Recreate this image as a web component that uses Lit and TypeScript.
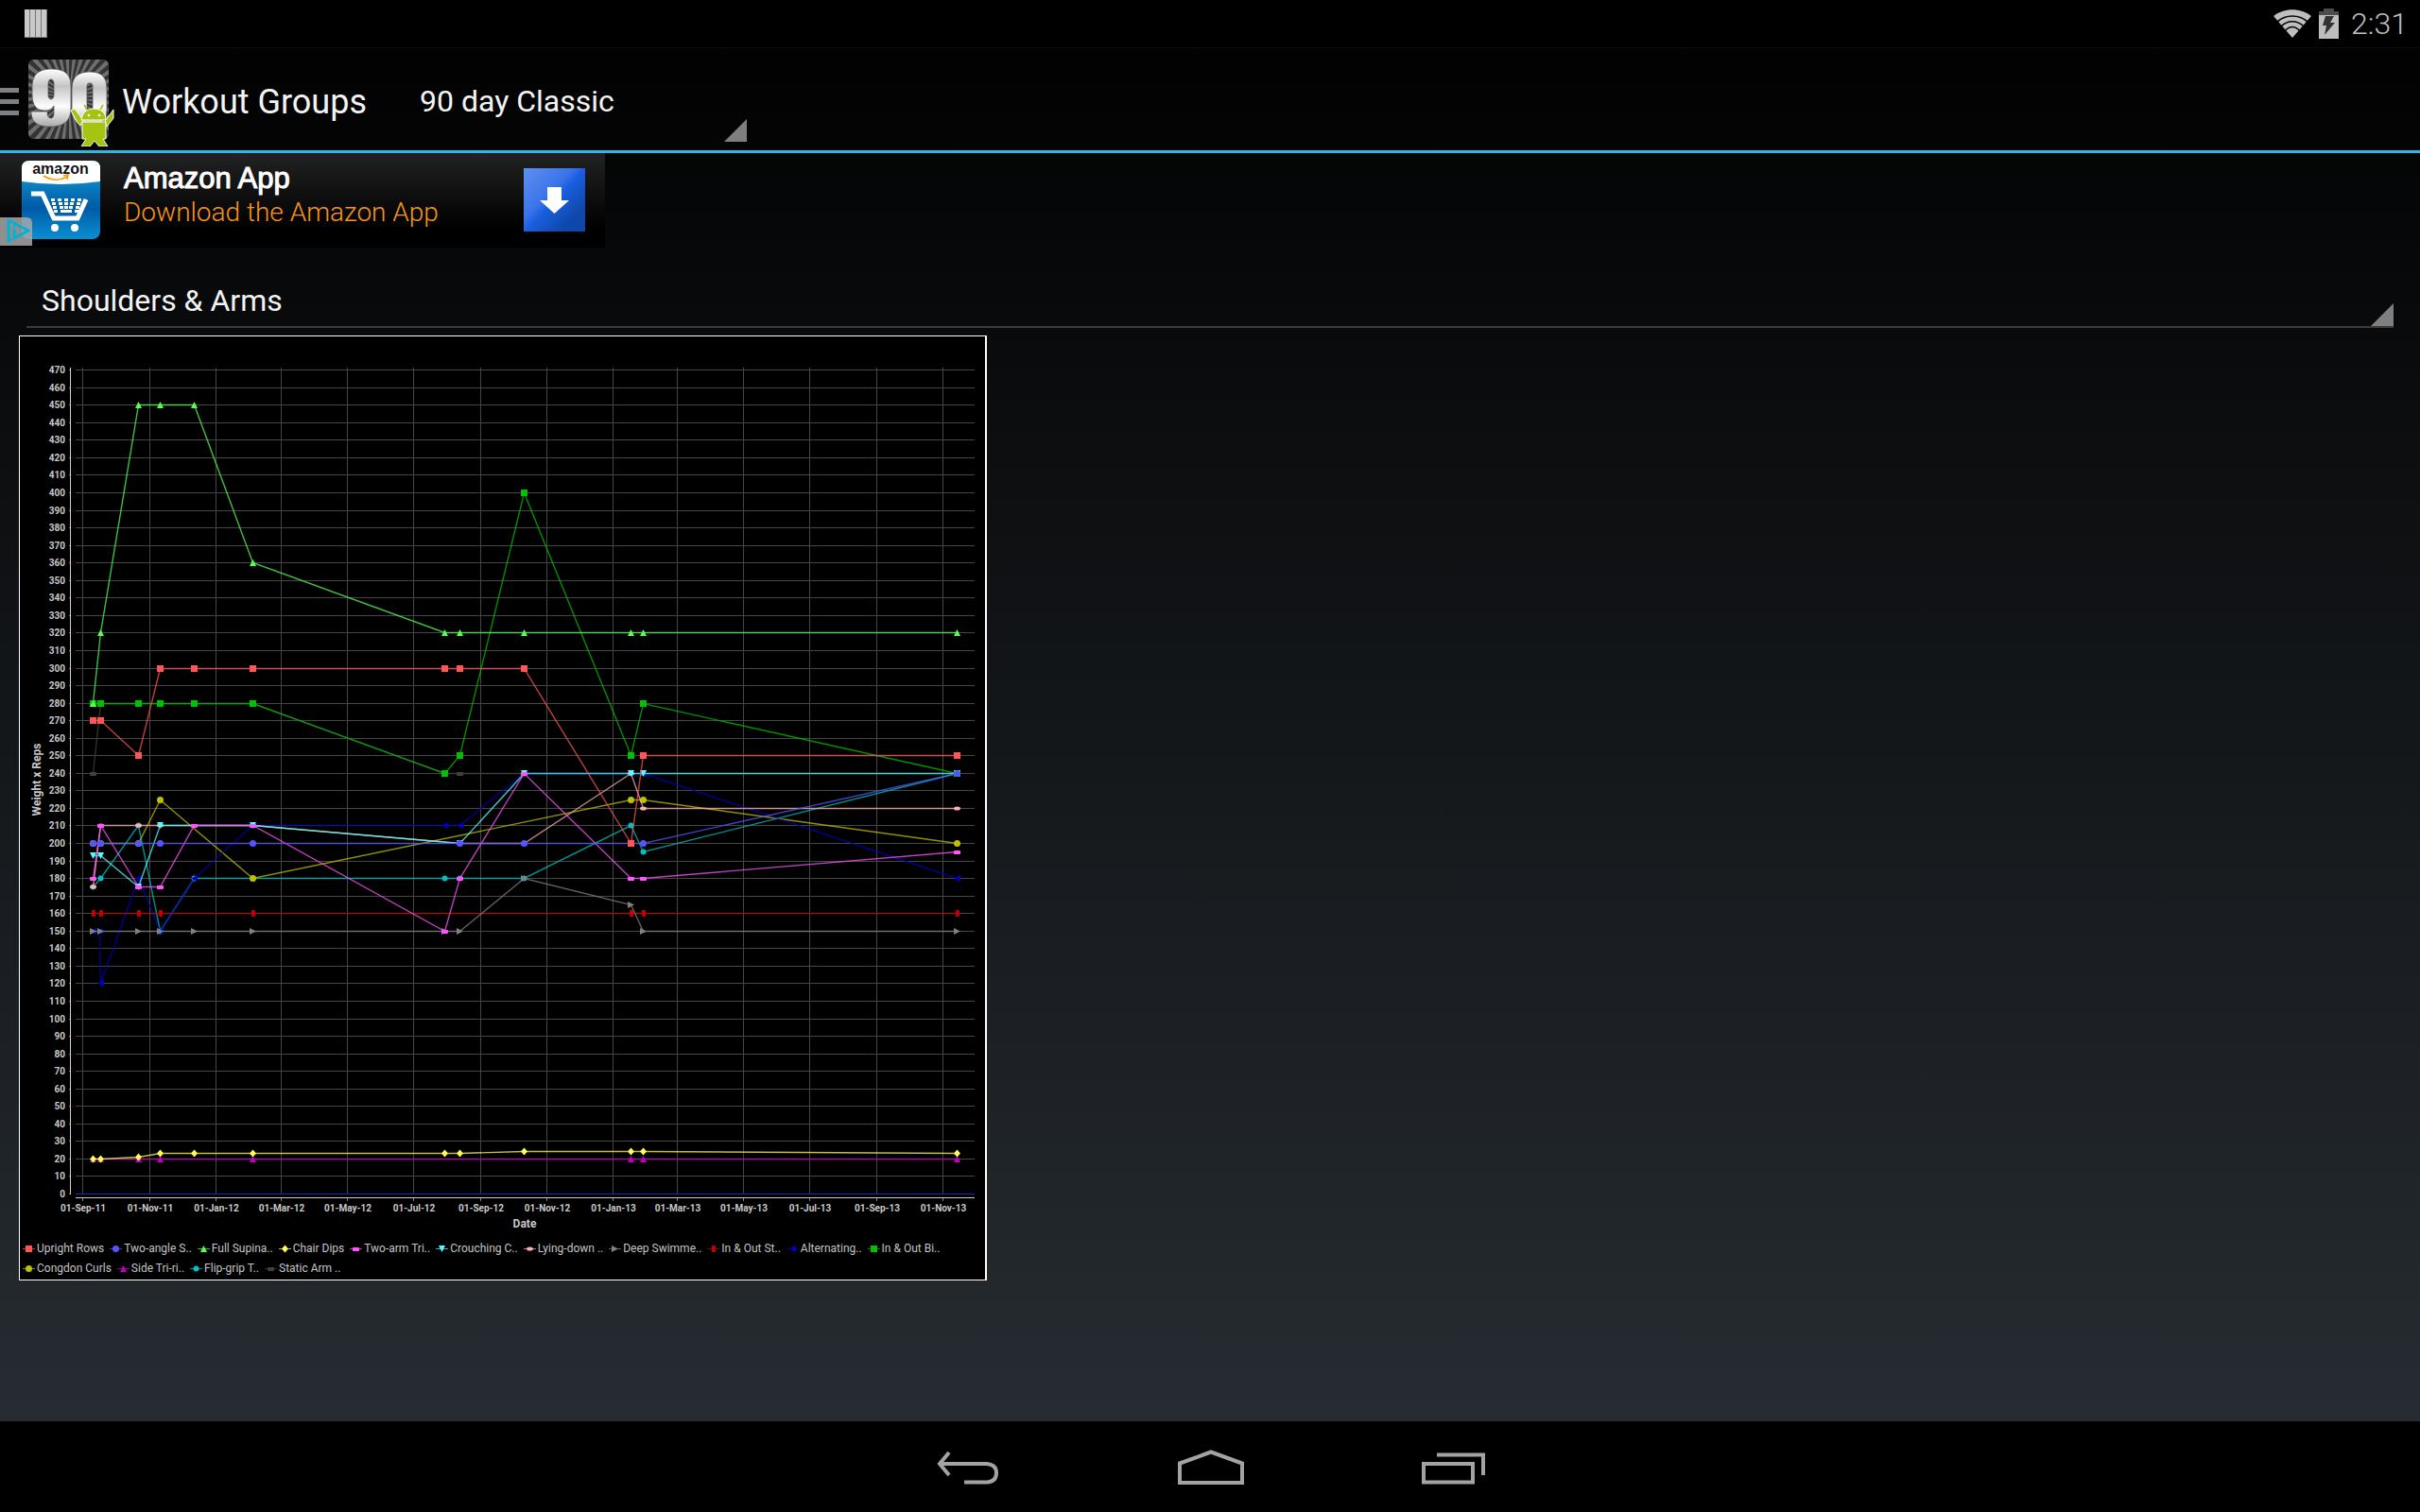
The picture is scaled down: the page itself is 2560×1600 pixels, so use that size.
import { LitElement, html, svg, css } from "lit";
import { customElement } from "lit/decorators.js";

type Shape =
  | "square" | "circle" | "up" | "diamond" | "hrect" | "down"
  | "hellipse" | "right" | "vrect" | "left" | "dot";

interface Series {
  name: string;
  color: string;
  shape: Shape;
  values: (number | null)[];
  extra?: boolean;
}

/* Horizontal place of every logged workout day, in plot units. */
const DAYS = [78, 86, 126, 149, 185, 247, 450, 466, 534, 647, 660, 992];
const MONTHS: [string, number][] = [
  ["01-Sep-11", 67], ["01-Nov-11", 138], ["01-Jan-12", 208], ["01-Mar-12", 277],
  ["01-May-12", 347], ["01-Jul-12", 417], ["01-Sep-12", 488], ["01-Nov-12", 558],
  ["01-Jan-13", 628], ["01-Mar-13", 696], ["01-May-13", 766], ["01-Jul-13", 836],
  ["01-Sep-13", 907], ["01-Nov-13", 977],
];
const N = null;
const SERIES: Series[] = [
  { name: "Upright Rows", color: "#ff5555", shape: "square", values: [270, 270, 250, 300, 300, 300, 300, 300, 300, 200, 250, 250] },
  { name: "Two-angle S..", color: "#5555ff", shape: "circle", values: [200, 200, 200, 200, N, 200, N, 200, 200, 200, 200, 240] },
  { name: "Full Supina..", color: "#55ff55", shape: "up", values: [280, 320, 450, 450, 450, 360, 320, 320, 320, 320, 320, 320] },
  { name: "Chair Dips", color: "#ffff55", shape: "diamond", values: [20, 20, 21, 23, 23, 23, 23, 23, 24, 24, 24, 23] },
  { name: "Two-arm Tri..", color: "#ff55ff", shape: "hrect", values: [180, 210, 175, 175, 210, 210, 150, 180, 240, 180, 180, 195] },
  { name: "Crouching C..", color: "#55ffff", shape: "down", values: [193, 193, 175, 210, N, 210, N, 200, 240, 240, 240, 240] },
  { name: "Lying-down ..", color: "#ffafaf", shape: "hellipse", values: [175, 210, 210, 210, N, 210, N, 200, 200, 240, 220, 220] },
  { name: "Deep Swimme..", color: "#808080", shape: "right", values: [150, 150, 150, 150, 150, 150, 150, 150, 180, 165, 150, 150] },
  { name: "In & Out St..", color: "#c00000", shape: "vrect", values: [160, 160, 160, 160, N, 160, N, N, N, 160, 160, 160] },
  { name: "Alternating..", color: "#0000c0", shape: "left", values: [150, 120, 180, 150, 180, 210, 210, 210, 240, 240, 240, 180], extra: true },
  { name: "In & Out Bi..", color: "#00c000", shape: "square", values: [280, 280, 280, 280, 280, 280, 240, 250, 400, 250, 280, 240] },
  { name: "Congdon Curls", color: "#c0c000", shape: "circle", values: [200, 200, 200, 225, N, 180, N, N, N, 225, 225, 200] },
  { name: "Side Tri-ri..", color: "#c000c0", shape: "up", values: [20, 20, 20, 20, N, 20, N, N, N, 20, 20, 20] },
  { name: "Flip-grip T..", color: "#00c0c0", shape: "dot", values: [175, 180, 210, 150, 180, 180, 180, 180, 180, 210, 195, 240] },
  { name: "Static Arm ..", color: "#404040", shape: "hrect", values: [240, 280, 280, 280, N, 280, 240, 240, 240, 240, 240, 240] },
];

const yOf = (v: number) => Math.round(908 - v * 1.855);

function marker(shape: Shape, x: number, y: number, color: string) {
  switch (shape) {
    case "square": return svg`<rect x=${x - 3} y=${y - 3} width="7" height="7" fill=${color}></rect>`;
    case "circle": return svg`<circle cx=${x + 0.5} cy=${y + 0.5} r="3.5" fill=${color}></circle>`;
    case "up": return svg`<path d="M${x + 0.5} ${y - 3}l3.5 7h-7z" fill=${color}></path>`;
    case "down": return svg`<path d="M${x + 0.5} ${y + 4}l3.5 -7h-7z" fill=${color}></path>`;
    case "right": return svg`<path d="M${x + 4} ${y + 0.5}l-7 -3.5v7z" fill=${color}></path>`;
    case "left": return svg`<path d="M${x - 3} ${y + 0.5}l7 -3.5v7z" fill=${color}></path>`;
    case "diamond": return svg`<path d="M${x + 0.5} ${y - 3.5}l3.5 4l-3.5 4l-3.5 -4z" fill=${color}></path>`;
    case "hrect": return svg`<rect x=${x - 3} y=${y - 1} width="7" height="4" rx="1" fill=${color}></rect>`;
    case "hellipse": return svg`<ellipse cx=${x + 0.5} cy=${y + 0.5} rx="3.5" ry="2" fill=${color}></ellipse>`;
    case "vrect": return svg`<rect x=${x - 1} y=${y - 3} width="4" height="7" rx="1" fill=${color}></rect>`;
    case "dot": return svg`<circle cx=${x + 0.5} cy=${y + 0.5} r="3" fill=${color}></circle>`;
  }
}

@customElement("workout-chart")
export class WorkoutChart extends LitElement {
  static styles = css`
    :host { display: block; width: 1024px; max-width: 100%; }
    .figure {
      margin: 0; background: #000; border: 1px solid #fff; border-right-width: 2px;
      color: #c4c4c4; font-family: Roboto, "Liberation Sans", sans-serif;
    }
    .plot { display: block; width: 100%; height: auto; }
    .tick { font-size: 10px; font-weight: 700; fill: #c8c8c8; }
    .axis-name { font-size: 12px; font-weight: 700; fill: #c8c8c8; }
    .legend {
      list-style: none; margin: 0; padding: 0 3px 1px; display: flex; flex-wrap: wrap;
      column-gap: 6px; row-gap: 0;
    }
    .entry { display: flex; align-items: center; gap: 2px; height: 21px; font-size: 12px; line-height: 21px; white-space: pre; }
    .key { display: block; width: 13px; height: 9px; }
  `;

  private line(s: Series) {
    const pts: [number, number][] = [];
    s.values.forEach((v, i) => {
      if (v === null) return;
      if (s.extra && i === 1) pts.push([DAYS[1] - 1, 150]);
      pts.push([DAYS[i], v]);
    });
    return svg`
      <polyline points=${pts.map(([x, v]) => `${x + 0.5},${yOf(v) + 0.5}`).join(" ")}
        fill="none" stroke=${s.color} stroke-opacity="0.75" stroke-width="1.4"></polyline>
      ${pts.map(([x, v]) => marker(s.shape, x, yOf(v), s.color))}`;
  }

  render() {
    const levels = Array.from({ length: 48 }, (_, i) => i * 10);
    return html`
      <figure class="figure">
        <svg class="plot" viewBox="1 1 1021 955" role="img" aria-label="Weight x Reps by date">
          ${levels.map((v) => svg`
            <rect x="60" y=${yOf(v)} width="951" height="1" fill=${v ? "#464646" : "#2020c0"}></rect>
            <rect x="53" y=${yOf(v)} width="2" height="1" fill="#808080"></rect>
            <text class="tick" x="49" y=${yOf(v) + 4} text-anchor="end">${v}</text>`)}
          ${MONTHS.map(([label, x]) => svg`
            <rect x=${x} y="34" width="1" height="874" fill="#464646"></rect>
            <rect x=${x} y="913" width="1" height="3" fill="#808080"></rect>
            <text class="tick" x=${x + 1} y="927" text-anchor="middle">${label}</text>`)}
          <rect x="54" y="34" width="1" height="875" fill="#d0d0d0"></rect>
          <rect x="60" y="912" width="951" height="1" fill="#d0d0d0"></rect>
          ${[...SERIES].reverse().map((s) => this.line(s))}
          <text class="axis-name" x="535" y="944" text-anchor="middle">Date</text>
          <text class="axis-name" transform="translate(23 470) rotate(-90)" text-anchor="middle">Weight x Reps</text>
        </svg>
        <ul class="legend">
          ${SERIES.map((s) => html`
            <li class="entry">
              <svg class="key" viewBox="0 0 13 9" aria-hidden="true">
                <rect x="0" y="4" width="13" height="1" fill=${s.color} opacity="0.7"></rect>
                ${marker(s.shape, 6, 4, s.color)}
              </svg>
              <span>${s.name}</span>
            </li>`)}
        </ul>
      </figure>`;
  }
}

@customElement("app-icons-ninety")
export class NinetyIcon extends LitElement {
  static styles = css`
    :host { display: block; }
    .art { display: block; width: 92px; height: 94px; }
  `;
  render() {
    const rays = Array.from({ length: 36 }, (_, i) => {
      const a = (i * 10 * Math.PI) / 180;
      const b = a + 0.09;
      const p = (t: number) => `${(44 + 80 * Math.cos(t)).toFixed(1)} ${(42 + 80 * Math.sin(t)).toFixed(1)}`;
      return `M44 42L${p(a)}L${p(b)}z`;
    }).join("");
    return html`
      <svg class="art" viewBox="0 0 92 94" role="img" aria-label="90">
        <defs>
          <clipPath id="tile"><rect x="1" y="2" width="85" height="84" rx="6"></rect></clipPath>
          <linearGradient id="steel" x1="0" y1="0" x2="0" y2="1">
            <stop offset="0" stop-color="#fff"></stop><stop offset="0.3" stop-color="#c4c4c4"></stop>
            <stop offset="0.65" stop-color="#fdfdfd"></stop><stop offset="1" stop-color="#a8a8a8"></stop>
          </linearGradient>
        </defs>
        <g clip-path="url(#tile)">
          <rect width="92" height="94" fill="#6f6f6f"></rect>
          <path d=${rays} fill="#333"></path>
        </g>
        <path fill="url(#steel)" fill-rule="evenodd" stroke="#555" stroke-width="0.8" d="M26 12C10 12 5 19 5 32V39C5 51 10 56 18 56C24 56 26 54 28 51V58C28 62 27 64 25 64C22 64 21 62 21 57H4C4 67 9 73 24 73C40 73 46 66 46 53V30C46 18 40 12 26 12zM25 23C27 23 28 25 28 28V39C28 42 27 44 25 44C23 44 22 42 22 39V28C22 25 23 23 25 23z"></path>
        <path fill="url(#steel)" fill-rule="evenodd" stroke="#555" stroke-width="0.8" d="M66 15C53 15 47 21 47 33V56C47 66 53 72 66 72C79 72 84 66 84 56V33C84 21 79 15 66 15zM66 27C69 27 69 29 69 32V58C69 61 68 62 66 62C64 62 63 61 63 58V32C63 29 63 27 66 27z"></path>
        <g fill="#a4c411" stroke="#fff" stroke-width="1" stroke-linejoin="round">
          <path d="M46 56L50 54L59 66L56 72L53 69z"></path>
          <path d="M91 55L91 64L84 73L82 67z"></path>
          <path d="M58 68H83V86H80L85 94H76L71 88L66 94H57L62 86H58z"></path>
          <path d="M57 66C58 58 63 54 70 54C78 54 83 58 83 66z"></path>
        </g>
        <path d="M63 55L60 50M77 55L80 50" stroke="#a4c411" stroke-width="1.6"></path>
        <circle cx="65" cy="61" r="1.3" fill="#fff"></circle><circle cx="76" cy="61" r="1.3" fill="#fff"></circle>
      </svg>`;
  }
}

@customElement("app-root")
export class AppRoot extends LitElement {
  static styles = css`
    :host {
      display: flex; flex-direction: column; min-height: 100vh; box-sizing: border-box;
      background: linear-gradient(#000, #292f35); color: #f3f3f3;
      font-family: Roboto, "Liberation Sans", sans-serif;
    }
    svg { display: block; }
    .status {
      display: flex; align-items: center; justify-content: space-between; height: 50px;
      padding: 0 13px 0 26px; background: #000; color: #bebebe;
    }
    .tray { display: flex; align-items: center; gap: 8px; }
    .clock { font-size: 32px; line-height: 48px; font-weight: 300; padding-left: 4px; }
    .bar {
      display: flex; align-items: stretch; height: 108px; border-top: 1px solid #0c0d0d;
      border-bottom: 3px solid #33b5e5;
    }
    .home {
      display: flex; align-items: center; gap: 8px; border: 0; padding: 5px 0 0; background: none;
      color: inherit; font: inherit;
    }
    .title { margin: 0; font-size: 36px; line-height: 48px; font-weight: 400; }
    .home-art { display: flex; gap: 9px; align-items: center; }
    .spinner { position: relative; display: flex; }
    .select {
      appearance: none; border: 0; margin: 0; background: none; color: inherit; width: 100%;
      font: 400 32px/48px Roboto, "Liberation Sans", sans-serif; padding: 0 16px; outline: 0;
    }
    .corner { position: absolute; right: 0; bottom: 0; width: 24px; height: 24px; pointer-events: none; }
    .program { margin: 0 0 9px 40px; width: 362px; }
    .program .select { padding-top: 12px; }
    .ad {
      position: relative; display: flex; align-items: center; width: 640px; height: 100px;
      box-sizing: border-box; padding: 0 21px 2px 23px; gap: 25px; color: #fff; text-decoration: none;
      background: linear-gradient(#222, #000 80%);
    }
    .copy { display: flex; flex-direction: column; flex: 1; padding-bottom: 8px; }
    .brand { font: 400 31px/36px "Liberation Sans", sans-serif; -webkit-text-stroke: 1px #fff; }
    .pitch { font: 300 28px/36px Roboto, "Liberation Sans", sans-serif; color: #f7941d; }
    .choices { position: absolute; left: 0; bottom: 2px; }
    .wordmark { font: 700 16px "Liberation Sans", sans-serif; }
    .group { margin: 29px 28px 8px; border-bottom: 2px solid #3a3c3e; height: 54px; }
    .main { flex: 1; padding-bottom: 32px; }
    .chart { margin-left: 20px; }
    .nav { display: flex; justify-content: center; height: 96px; background: #000; }
    .key { display: flex; align-items: center; justify-content: center; width: 257px; border: 0; padding: 2px 0 0 2px; background: none; }
  `;

  private corner() {
    return html`<svg class="corner" viewBox="0 0 24 24" aria-hidden="true"><path d="M24 0V24H0z" fill="#7f7f7f"></path></svg>`;
  }

  render() {
    return html`
      <header>
        <div class="status">
          <svg width="24" height="30" viewBox="0 0 24 30" aria-hidden="true">
            <rect width="24" height="30" fill="#777"></rect>
            ${[0, 6, 12, 18].map((x) => svg`
              <rect x=${x} width="5" height="29" fill="#c8c8c8"></rect>`)}
          </svg>
          <div class="tray">
            <svg width="40" height="32" viewBox="0 0 40 32" aria-label="Wi-Fi" role="img">
              <path d="M0 8C11 -1 29 -1 40 8L20 31z" fill="#bebebe"></path>
              <path d="M4 14C13 6 27 6 36 14M8 19C15 12 25 12 32 19M12 24C17 18 23 18 28 24" fill="none" stroke="#000" stroke-width="1.7"></path>
            </svg>
            <svg width="22" height="32" viewBox="0 0 22 32" aria-label="Battery charging" role="img">
              <path d="M5 0H16V3H21V7H0V3H5z" fill="#4c4c4c"></path>
              <rect y="7" width="21" height="25" fill="#bebebe"></rect>
              <path d="M7 8H16L12 15H17L6 28L8 18H4z" fill="#333"></path>
            </svg>
            <time class="clock">2:31</time>
          </div>
        </div>
        <div class="bar">
          <button class="home" aria-label="Open menu">
            <span class="home-art">
              <svg width="20" height="30" viewBox="0 0 20 30" aria-hidden="true">
                <path d="M0 0H20V5H0zM0 12H20V17H0zM0 24H20V29H0z" fill="#7f8085"></path>
              </svg>
              <app-icons-ninety></app-icons-ninety>
            </span>
            <h1 class="title">Workout Groups</h1>
          </button>
          <div class="spinner program">
            <select class="select" aria-label="Program"><option>90 day Classic</option></select>
            ${this.corner()}
          </div>
        </div>
      </header>
      <main class="main">
        <a class="ad" href="#amazon">
          <svg width="83" height="83" viewBox="0 0 83 83" role="img" aria-label="Amazon">
            <defs>
              <linearGradient id="sea" x1="0" y1="0" x2="0" y2="1">
                <stop offset="0.25" stop-color="#0d86c6"></stop><stop offset="0.6" stop-color="#005aa5"></stop><stop offset="1" stop-color="#0a8fd0"></stop>
              </linearGradient>
            </defs>
            <rect width="83" height="83" rx="8" fill="url(#sea)"></rect>
            <path d="M8 0H75Q83 0 83 8V22Q41 28 0 22V8Q0 0 8 0z" fill="#fff"></path>
            <text class="wordmark" x="41" y="14" text-anchor="middle" fill="#111">amazon</text>
            <path d="M23 16Q36 24 48 17M44 16L49 15L48 20" fill="none" stroke="#f90" stroke-width="1.6"></path>
            <path d="M10 35H22L34 61H59L68 41" fill="none" stroke="#fff" stroke-width="5"></path>
            <g fill="#fff">
              <circle cx="35" cy="71" r="4"></circle><circle cx="56" cy="71" r="4"></circle>
              ${[0, 1, 2, 3].map((r) => [0, 1, 2, 3, 4].map((c) => svg`<rect x=${31 + c * 7 - (c > 2 ? r : 0) + (c < 2 ? r : 0)} y=${40 + r * 4} width="4" height="3"></rect>`))}
            </g>
          </svg>
          <span class="copy">
            <span class="brand">Amazon App</span>
            <span class="pitch">Download the Amazon App</span>
          </span>
          <svg width="65" height="67" viewBox="0 0 65 67" role="img" aria-label="Download">
            <defs>
              <linearGradient id="blue" x1="0" y1="0" x2="1" y2="1">
                <stop offset="0" stop-color="#5f8ff0"></stop><stop offset="0.4" stop-color="#3b74ea"></stop>
                <stop offset="0.5" stop-color="#1a5fe0"></stop><stop offset="0.8" stop-color="#0f48ab"></stop>
              </linearGradient>
            </defs>
            <rect width="65" height="67" fill="url(#blue)"></rect>
            <path d="M25 20H40V34H48L32.5 48L17 34H25z" fill="#fff"></path>
          </svg>
          <svg class="choices" width="34" height="30" viewBox="0 0 34 30" aria-label="Ad choices" role="img">
            <path d="M0 0H28Q34 0 34 6V30H0z" fill="#a8a8a8" opacity="0.85"></path>
            <path d="M12 23L9 25V3L30 14L15 22V12" fill="none" stroke="#00b2d6" stroke-width="3" stroke-linejoin="round"></path>
            <circle cx="15" cy="9" r="1.5" fill="#00b2d6"></circle>
          </svg>
        </a>
        <div class="spinner group">
          <select class="select" aria-label="Workout"><option>Shoulders &amp; Arms</option></select>
          ${this.corner()}
        </div>
        <workout-chart class="chart"></workout-chart>
      </main>
      <nav class="nav" aria-label="System">
        <button class="key" aria-label="Back">
          <svg width="66" height="38" viewBox="0 0 66 38" fill="none" stroke="#a3a3a3" stroke-width="4">
            <path d="M13 3L3 15L13 27M3 15H53Q63 16 63 24.5Q63 34 53 34.5H29"></path>
          </svg>
        </button>
        <button class="key" aria-label="Home">
          <svg width="72" height="38" viewBox="0 0 72 38" fill="none" stroke="#a3a3a3" stroke-width="4">
            <path d="M3 14.5L36 2.5L69 14.5V35H3z"></path>
          </svg>
        </button>
        <button class="key" aria-label="Recent apps">
          <svg width="68" height="38" viewBox="0 0 68 38" fill="none" stroke="#a3a3a3" stroke-width="4">
            <path d="M2 15H54V34.5H2zM16 5.5H65V27"></path>
          </svg>
        </button>
      </nav>`;
  }
}
